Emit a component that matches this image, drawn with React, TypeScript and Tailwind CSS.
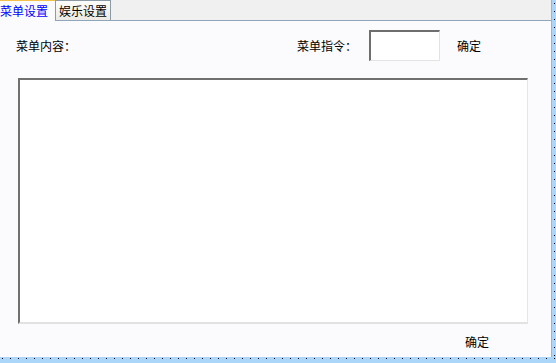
const FONT = "font-['Noto_Sans_CJK_SC','Noto_Sans',sans-serif] text-[12px] leading-[16px]";

function Tabs() {
  return (
    <div className="flex h-[21px] items-end border-b border-[#8fa5bb] bg-[#f0f0f0]">
      {/* selected tab — joins the panel, orange top edge */}
      <div className="-mb-px flex h-[21px] w-[55px] items-start border-t border-[#f2c14a] bg-[#fbfbfd] text-[#0000ff]">
        <span className="pt-[2px]">菜单设置</span>
      </div>
      <div className="flex h-[20px] w-[56px] items-center justify-center border border-b-0 border-[#8c9aa6] bg-gradient-to-b from-[#fdfdfb] to-[#eceae2] text-black">
        娱乐设置
      </div>
    </div>
  );
}

export default function App() {
  return (
    <div className={`${FONT} flex h-[363px] w-[556px] flex-col overflow-hidden bg-[#abd6fa] text-black`}>
      <div className="flex h-[357px]">
        <div className="flex w-[552px] flex-col border-r border-[#9fb4c8] bg-[#fbfbfd]">
          <Tabs />

          {/* top row: content label, command input, confirm */}
          <div className="mt-[9px] flex h-[31px] items-center pl-[16px]">
            <span className="w-[281px]">菜单内容：</span>
            <span className="w-[72px]">菜单指令：</span>
            <div className="h-[31px] w-[71px] border-t-2 border-r border-b border-l-2 border-t-[#6e6e6e] border-r-[#e3e3e3] border-b-[#e3e3e3] border-l-[#6e6e6e] bg-white" />
            <span className="ml-[17px]">确定</span>
          </div>

          {/* menu content box */}
          <div className="mt-[17px] ml-[18px] h-[246px] w-[510px] border-t-2 border-r border-b-2 border-l-2 border-t-[#707070] border-r-[#e6e6e6] border-b-[#e2e2e2] border-l-[#707070] bg-white" />

          <div className="mt-[10px] ml-[465px]">确定</div>
        </div>
        <div className="flex flex-1 justify-center">
          <div className="w-px bg-[repeating-linear-gradient(180deg,#000_0_1px,transparent_1px_8px)] bg-[position:0_3px]" />
        </div>
      </div>
      <div className="mt-px h-px bg-[repeating-linear-gradient(90deg,#000_0_1px,transparent_1px_8px)] bg-[position:2px_0]" />
    </div>
  );
}
